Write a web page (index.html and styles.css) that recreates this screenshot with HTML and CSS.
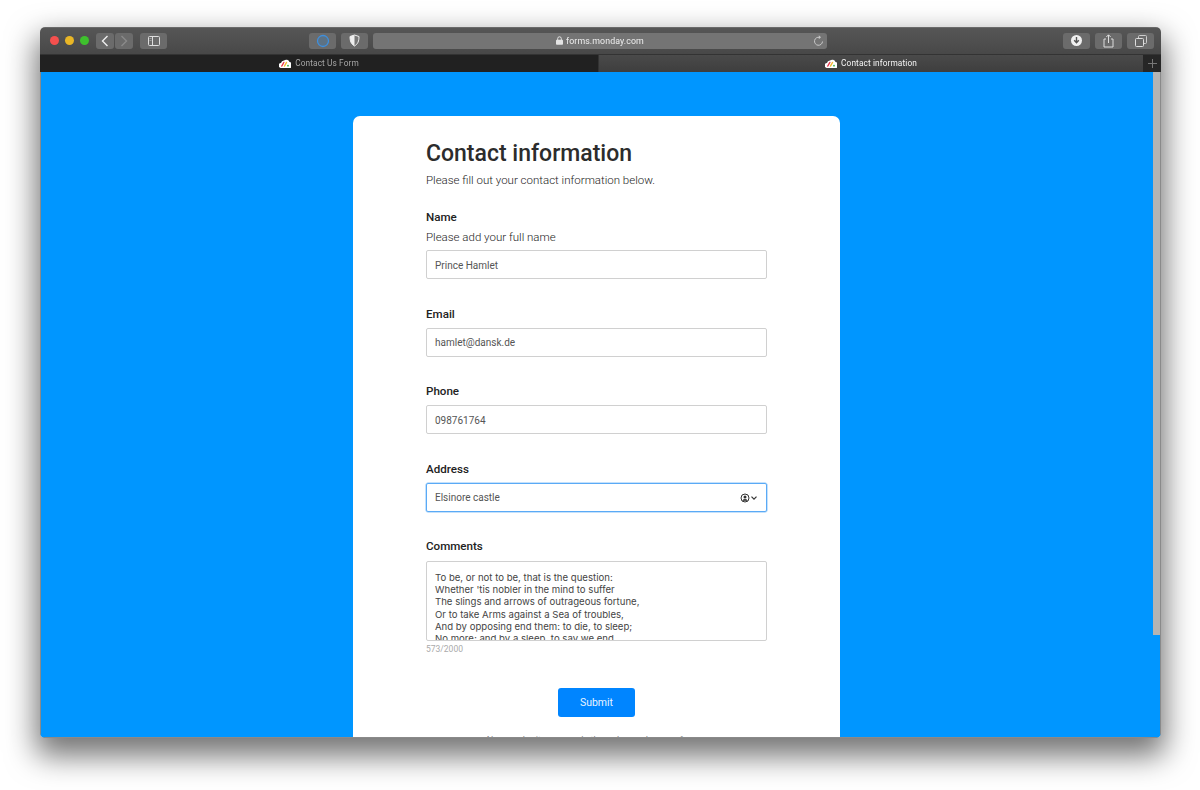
FILE: index.html
```html
<!DOCTYPE html>
<html lang="en">
<head>
<meta charset="utf-8">
<title>Contact information</title>
<link rel="stylesheet" href="styles.css">
</head>
<body>
<div class="window">
  <header class="toolbar">
    <div class="lights"><i class="light red"></i><i class="light yellow"></i><i class="light green"></i></div>
    <div class="nav">
      <span class="tbtn nav-btn"><svg width="10" height="14" viewBox="0 0 10 14"><path d="M7.500 2 2.500 7l5 5" fill="none" stroke="#eee" stroke-width="1.400"/></svg></span>
      <span class="tbtn nav-btn"><svg width="10" height="14" viewBox="0 0 10 14"><path d="M2.500 2l5 5-5 5" fill="none" stroke="#8a8a8a" stroke-width="1.400"/></svg></span>
    </div>
    <span class="tbtn wide"><svg width="12" height="10" viewBox="0 0 12 10"><rect x=".5" y=".5" width="11" height="9" rx="1" fill="none" stroke="#ddd"/><path d="M4.500 .5v9" stroke="#ddd"/><path d="M1.500 2.500h2M1.500 4.500h2" stroke="#aaa" stroke-width=".8"/></svg></span>
    <span class="tbtn wide ext-a"><svg width="14" height="14" viewBox="0 0 14 14"><circle cx="7" cy="7" r="5.500" fill="#5d7284" stroke="#3f8fdc" stroke-width="1.300"/></svg></span>
    <span class="tbtn wide ext-b"><svg width="11" height="13" viewBox="0 0 11 13"><path d="M5.500 1 10 2.500c0 4.500-1 7.500-4.500 9.500C2 10 1 7 1 2.500Z" fill="#777" stroke="#eee"/><path d="M5.500 1 1 2.500C1 7 2 10 5.500 12Z" fill="#eee"/></svg></span>
    <div class="url">
      <span class="url-host"><svg width="7" height="9" viewBox="0 0 7 9"><path d="M1.700 4V2.600a1.800 1.800 0 0 1 3.600 0V4" fill="none" stroke="#e4e4e4"/><rect y="3.800" width="7" height="5" rx=".8" fill="#e4e4e4"/></svg>forms.monday.com</span>
      <svg class="reload" width="11" height="12" viewBox="0 0 11 12"><path d="M6.500 2.400A4 4 0 1 0 9.500 6.500" fill="none" stroke="#c8c8c8"/><path d="M5.800 .3 8 2.300 5.800 4.200Z" fill="#c8c8c8"/></svg>
    </div>
    <span class="tbtn wide"><svg width="13" height="13" viewBox="0 0 13 13"><circle cx="6.500" cy="6.500" r="5.500" fill="#f0f0f0"/><path d="M6.500 3v5M4.200 6.200l2.300 2.500 2.300-2.500" fill="none" stroke="#555" stroke-width="1.400"/></svg></span>
    <span class="tbtn wide"><svg width="11" height="14" viewBox="0 0 11 14"><path d="M3 5H1v8h9V5H8" fill="none" stroke="#ddd"/><path d="M5.500 9V1M3.300 3l2.200-2.200L7.700 3" fill="none" stroke="#ddd"/></svg></span>
    <span class="tbtn wide"><svg width="12" height="12" viewBox="0 0 12 12"><rect x="3.500" y=".5" width="8" height="8" rx="1" fill="none" stroke="#ccc"/><rect x=".5" y="3.500" width="8" height="8" rx="1" fill="#666" stroke="#ddd"/></svg></span>
  </header>
  <nav class="tabs">
    <div class="tab inactive"><svg class="logo" width="12" height="9" viewBox="0 0 12 9"><use href="#monday"/></svg>Contact Us Form</div>
    <div class="tab active"><svg class="logo" width="12" height="9" viewBox="0 0 12 9"><use href="#monday"/></svg>Contact information</div>
    <div class="tab-add"><svg width="9" height="9" viewBox="0 0 9 9"><path d="M4.500 0v9M0 4.500h9" stroke="#777"/></svg></div>
  </nav>
  <svg class="defs" width="0" height="0"><defs><g id="monday"><path d="M2.500 9A2.500 2.500 0 0 1 2 4 3 3 0 0 1 5 1.500 3.500 3.500 0 0 1 10.500 3 3 3 0 0 1 10 9Z" fill="#fff"/><path d="M2.800 7 4.800 3.500" stroke="#e8384f" stroke-width="1.500" stroke-linecap="round"/><path d="M5.500 7 7.500 3.500" stroke="#f5b82e" stroke-width="1.500" stroke-linecap="round"/><circle cx="9" cy="6.700" r=".9" fill="#35b24a"/></g></defs></svg>
  <main class="page">
    <div class="scroll-track"><div class="scroll-thumb"></div></div>
    <section class="card">
      <h1 class="title">Contact information</h1>
      <p class="subtitle">Please fill out your contact information below.</p>
      <div class="field first">
        <div class="label">Name</div>
        <div class="hint">Please add your full name</div>
        <div class="input">Prince Hamlet</div>
      </div>
      <div class="field">
        <div class="label">Email</div>
        <div class="input">hamlet@dansk.de</div>
      </div>
      <div class="field">
        <div class="label">Phone</div>
        <div class="input">098761764</div>
      </div>
      <div class="field">
        <div class="label">Address</div>
        <div class="input focused">Elsinore castle
          <svg width="18" height="10" viewBox="0 0 18 10"><circle cx="5" cy="5" r="4" fill="none" stroke="#333" stroke-width="1"/><circle cx="5" cy="3.900" r="1.500" fill="#333"/><path d="M2.600 7.800C3.200 6.200 6.800 6.200 7.400 7.800" fill="#333" stroke="#333"/><path d="M11.500 3.700 14 6.200l2.500-2.500" fill="none" stroke="#333" stroke-width="1.200"/></svg>
        </div>
      </div>
      <div class="field">
        <div class="label">Comments</div>
        <div class="textarea">To be, or not to be, that is the question:
Whether 'tis nobler in the mind to suffer
The slings and arrows of outrageous fortune,
Or to take Arms against a Sea of troubles,
And by opposing end them: to die, to sleep;
No more; and by a sleep, to say we end</div>
        <div class="counter">573/2000</div>
      </div>
      <div class="actions"><button class="submit" type="button">Submit</button></div>
      <p class="footnote">Never submit passwords through monday.com forms.</p>
    </section>
  </main>
</div>
</body>
</html>
```

FILE: styles.css
```css
* { box-sizing: border-box; }
html, body { height: 100%; }
body {
  margin: 0;
  background: #fff;
  padding: 27px 39px 52px 40px;
  overflow: hidden;
  font-family: Roboto, "Liberation Sans", sans-serif;
}
.window {
  height: 711px;
  display: flex;
  flex-direction: column;
  border-radius: 5px;
  overflow: hidden;
  box-shadow: 0 14px 30px 4px rgba(0, 0, 0, .55);
  position: relative;
  filter: blur(.3px);
}
.defs { position: absolute; }
.toolbar {
  height: 27px;
  flex: none;
  display: flex;
  align-items: center;
  padding: 0 6px 1px 10px;
  background: linear-gradient(#565656, #484848);
  border-top: 1px solid #6a6a6a;
}
.lights { display: flex; gap: 6px; margin-right: 7px; }
.light { width: 9px; height: 9px; border-radius: 50%; display: block; }
.red { background: #f5504e; }
.yellow { background: #e9b626; }
.green { background: #3ec02d; }
.nav { display: flex; gap: 1px; margin-right: 7px; }
.tbtn {
  height: 16px;
  display: flex;
  align-items: center;
  justify-content: center;
  background: #6b6b6b;
  border-radius: 3px;
}
.nav-btn { width: 18px; }
.wide { width: 27px; }
.ext-a { margin-left: 142px; }
.ext-b { margin-left: 5px; }
.url {
  width: 454px;
  height: 16px;
  margin: 0 236px 0 5px;
  background: #747474;
  border-radius: 3px;
  display: flex;
  align-items: center;
  justify-content: center;
  position: relative;
}
.url-host {
  display: flex;
  align-items: center;
  gap: 3px;
  font-size: 8.800px;
  color: #eee;
  letter-spacing: .1px;
}
.reload { position: absolute; right: 3px; top: 2px; }
.toolbar .wide:nth-last-child(-n+2) { margin-left: 5px; }
.tabs {
  height: 18px;
  flex: none;
  display: flex;
  font-size: 8.300px;
  background: #454545;
  border-top: 1px solid #333;
}
.tab {
  display: flex;
  align-items: center;
  justify-content: center;
  gap: 3px;
  padding-bottom: 1px;
  letter-spacing: .1px;
}
.logo { margin-right: 1px; }
.inactive { width: 559px; background: #212121; color: #a5a5a5; border-right: 1px solid #333; }
.active { width: 544px; background: linear-gradient(#4a4a4a, #3e3e3e); color: #f4f4f4; }
.tab-add { flex: 1; background: #262626; display: flex; align-items: center; justify-content: center; }
.page {
  flex: 1;
  min-height: 0;
  background: #0096ff;
  border: 1px solid #8a8a8a;
  border-top: 0;
  display: flex;
  justify-content: center;
  padding: 44px 0 0;
  position: relative;
  overflow: hidden;
}
.scroll-track {
  position: absolute;
  right: 0;
  top: 0;
  width: 7px;
  height: 563px;
}
.scroll-thumb { height: 100%; background: #b4b4b4; }
.card {
  width: 487px;
  flex: none;
  margin-left: -8px;
  height: 700px;
  background: #fff;
  border-radius: 7px 7px 0 0;
  padding: 24px 73px 0;
  color: #323338;
}
.title {
  margin: 0;
  font-size: 23px;
  line-height: 28px;
  font-weight: 500;
  color: #2c2c2c;
}
.subtitle {
  margin: 4px 0 0;
  font-size: 11.500px;
  line-height: 16px;
  font-weight: 300;
  color: #1c1c1c;
}
.field { margin-top: 27.500px; }
.field.first { margin-top: 22px; }
.label {
  font-size: 11.600px;
  line-height: 14px;
  font-weight: 500;
  color: #222;
}
.hint {
  margin-top: 5px;
  font-size: 11.500px;
  line-height: 16px;
  font-weight: 300;
  color: #1c1c1c;
}
.input {
  height: 29px;
  margin-top: 7px;
  width: 341px;
  border: 1px solid #d0d0d0;
  border-radius: 2px;
  padding: 1px 8px 0;
  display: flex;
  align-items: center;
  justify-content: space-between;
  font-size: 10px;
  color: #555;
}
.hint + .input { margin-top: 5px; }
.focused { border: 1px solid #5aaaf6; box-shadow: 0 0 0 .5px #8cc4f8; }
.textarea {
  margin-top: 8px;
  width: 341px;
  height: 80px;
  border: 1px solid #d0d0d0;
  border-radius: 2px;
  padding: 10px 8px 0;
  font-family: Inter, Roboto, sans-serif;
  font-size: 9.600px;
  line-height: 12.200px;
  color: #444;
  white-space: pre;
  overflow: hidden;
}
.counter {
  margin-top: 2px;
  font-size: 8.500px;
  line-height: 12px;
  color: #aaa;
}
.actions { display: flex; justify-content: center; margin-top: 33px; }
.submit {
  width: 77px;
  height: 29px;
  border: 0;
  border-radius: 3px;
  background: #0085ff;
  color: #e8f3ff;
  font: 400 10.500px Roboto, sans-serif;
}
.footnote {
  margin: 17px 0 0;
  text-align: center;
  font-size: 9.200px;
  color: #888;
}
```
